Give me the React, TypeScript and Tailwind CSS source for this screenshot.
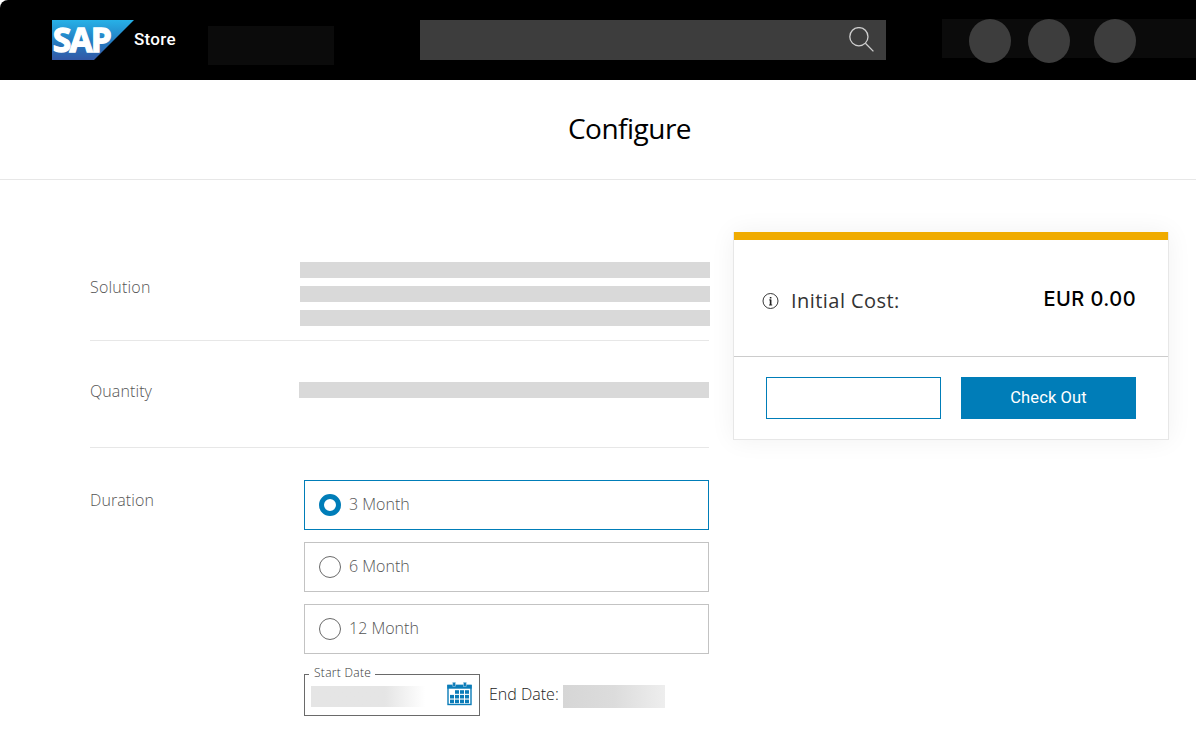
import type { ReactNode } from "react";

function SapLogo() {
  return (
    <svg width="82" height="40" viewBox="0 0 82 40" className="block shrink-0 overflow-visible">
      <defs>
        <linearGradient id="sap" x1="0" y1="0" x2="0" y2="1">
          <stop offset="0" stopColor="#27b1e7" />
          <stop offset="0.5" stopColor="#2480c4" />
          <stop offset="1" stopColor="#3358a6" />
        </linearGradient>
      </defs>
      <path d="M0 0H82L42 40H0Z" fill="url(#sap)" />
      <text
        x="0.8"
        y="32"
        textLength="59"
        lengthAdjust="spacing"
        fill="#fff"
        stroke="#fff"
        strokeWidth="1.3"
        fontFamily="'Open Sans', sans-serif"
        fontWeight="700"
        fontSize="33.5"
      >
        SAP
      </text>
    </svg>
  );
}

function Header() {
  return (
    <header className="flex h-20 rounded-tl-lg bg-black pl-[52px] pt-5">
      <SapLogo />
      <span className="w-[74px] pt-[7px] font-['Roboto'] text-[17px] leading-6 font-medium tracking-[0.3px] text-white">
        Store
      </span>
      <div className="mt-1.5 h-[39px] w-[126px] bg-[#0b0b0b]" />
      <div className="ml-[86px] flex h-10 w-[466px] justify-end bg-[#3d3d3d] pr-3 pt-[7px]">
        <svg width="26" height="26" viewBox="0 0 26 26" fill="none" stroke="#cfcfcf" strokeWidth="1.3">
          <circle cx="10.9" cy="9.7" r="9.1" />
          <path d="M17.4 16.2L25.4 24.4" />
        </svg>
      </div>
      <div className="-mt-px ml-14 flex h-[39px] flex-1 bg-[#0b0b0b] pl-[27px]">
        <div className="h-11 w-[42px] rounded-[50%] bg-[#3d3d3d]" />
        <div className="ml-[17px] h-11 w-[42px] rounded-[50%] bg-[#3d3d3d]" />
        <div className="ml-6 h-11 w-[42px] rounded-[50%] bg-[#3d3d3d]" />
      </div>
    </header>
  );
}

function Option({ label, selected = false }: { label: ReactNode; selected?: boolean }) {
  return (
    <label
      className={
        selected
          ? "flex h-[50px] items-center border border-[#007db8] pl-[14px]"
          : "flex h-[50px] items-center border border-[#c3c3c3] pl-[14px]"
      }
    >
      <span
        className={
          selected
            ? "size-[22px] rounded-full border-[5px] border-[#007db8]"
            : "size-[22px] rounded-full border border-[#6a6a6a]"
        }
      />
      <span className="ml-2 pb-0.5 text-[16px] leading-6 text-[#555]">{label}</span>
    </label>
  );
}

function CalendarIcon() {
  const cells: [number, number][] = [];
  for (let r = 0; r < 3; r++) {
    for (let c = 0; c < 4; c++) {
      if (r > 0 || c > 0) cells.push([3 + c * 5, 8.2 + r * 4.7]);
    }
  }
  return (
    <svg width="25" height="24" viewBox="0 0 25 24" className="block">
      <rect x="1" y="3.5" width="23" height="19" fill="#fff" stroke="#0b7cb8" strokeWidth="1.4" />
      <rect x="0.3" y="2.8" width="24.4" height="3.9" fill="#0b7cb8" />
      <rect x="5.8" y="0.3" width="2.6" height="4.2" fill="#0b7cb8" stroke="#a9cce2" strokeWidth="0.6" />
      <rect x="16.6" y="0.3" width="2.6" height="4.2" fill="#0b7cb8" stroke="#a9cce2" strokeWidth="0.6" />
      {cells.map(([x, y]) => (
        <rect key={`${x}-${y}`} x={x} y={y} width="4" height="3.6" fill="#0b7cb8" />
      ))}
    </svg>
  );
}

function Configuration() {
  return (
    <section className="w-[620px]">
      <div className="flex h-[161px]">
        <div className="mr-px flex w-full border-b border-[#e7e7e7]">
          <div className="w-[210px] pt-[95px] text-[16px] leading-6 tracking-[0.2px] text-[#555]">Solution</div>
          <div className="-mr-px flex flex-1 flex-col gap-2 pt-[82px]">
            <div className="h-4 bg-[#d9d9d9]" />
            <div className="h-4 bg-[#d9d9d9]" />
            <div className="h-4 bg-[#d9d9d9]" />
          </div>
        </div>
      </div>
      <div className="mr-px flex h-[107px] border-b border-[#e7e7e7]">
        <div className="w-[209px] pt-[38px] text-[16px] leading-6 tracking-[0.1px] text-[#555]">Quantity</div>
        <div className="mt-[41px] h-4 flex-1 bg-[#d9d9d9]" />
      </div>
      <div className="mr-px flex pt-8">
        <div className="w-[214px] pt-2 text-[16px] leading-6 tracking-[0.1px] text-[#555]">Duration</div>
        <div className="flex flex-1 flex-col gap-3">
          <Option label="3 Month" selected />
          <Option label="6 Month" />
          <Option label="12 Month" />
          <div className="flex">
            <fieldset className="-mt-px h-[51px] w-[176px] border border-[#6a6a6a] pl-1.5">
              <legend className="ml-[-2px] h-[19px] pr-1 pl-[5px] text-[12px] leading-[16px] tracking-[0.3px] text-[#333]">
                Start Date
              </legend>
              <div className="-mt-[3px] flex">
                <div className="mt-[5px] h-[21px] w-[114px] bg-linear-to-r from-[#e5e5e5] from-65% to-white" />
                <div className="ml-[22px] mt-px">
                  <CalendarIcon />
                </div>
              </div>
            </fieldset>
            <div className="ml-[9px] w-[74px] pt-[16px] text-[16px] leading-6 whitespace-nowrap text-[#222]">
              End Date:
            </div>
            <div className="mt-[19px] h-[23px] w-[102px] bg-linear-to-r from-[#d6d6d6] via-[#dcdcdc] to-[#eeeeee]" />
          </div>
        </div>
      </div>
    </section>
  );
}

function CostCard() {
  return (
    <aside className="mt-[52px] ml-[23px] flex h-[208px] w-[436px] flex-col border border-t-0 border-[#e7e7e7] shadow-[0_0_24px_rgba(0,0,0,0.06)]">
      <div className="h-2 bg-[#f0ab00]" />
      <div className="flex h-[117px] justify-between border-b border-[#cccccc] pr-8 pl-7">
        <div className="flex pt-[53px]">
          <svg width="17" height="17" viewBox="0 0 17 17" className="block" fill="none" stroke="#222">
            <circle cx="8.5" cy="8" r="7.5" strokeWidth="0.9" />
            <path d="M7.2 6.9H8.6V12M7 12H10.2" strokeWidth="0.9" />
            <path d="M8.6 3.9V5.5M8.6 6.5V12" strokeWidth="1.6" />
          </svg>
          <span className="-mt-1.5 ml-3 text-[20px] leading-7 font-normal tracking-[0.45px] whitespace-nowrap text-[#333]">
            Initial Cost:
          </span>
        </div>
        <span className="pt-[45px] font-['Inter'] text-[20px] leading-7 font-medium tracking-[0.45px] text-black">
          EUR 0.00
        </span>
      </div>
      <div className="flex gap-5 pt-5 pl-8">
        <button className="h-[42px] w-[175px] border border-[#007db8]" aria-label="Secondary action" />
        <button className="h-[42px] w-[175px] bg-[#007db8] font-['Roboto'] text-[16.5px] font-normal tracking-[0.1px] text-white">
          Check Out
        </button>
      </div>
    </aside>
  );
}

export default function App() {
  return (
    <div className="h-[732px] w-[1196px] overflow-hidden bg-white font-['Open_Sans',sans-serif] font-light">
      <Header />
      <h1 className="flex h-[100px] justify-center border-b border-[#e7e7e7] pt-[29px] pl-[63px] text-[28px] leading-[38px] font-normal tracking-[-0.5px] text-black">
        Configure
      </h1>
      <main className="flex pl-[90px]">
        <Configuration />
        <CostCard />
      </main>
    </div>
  );
}
